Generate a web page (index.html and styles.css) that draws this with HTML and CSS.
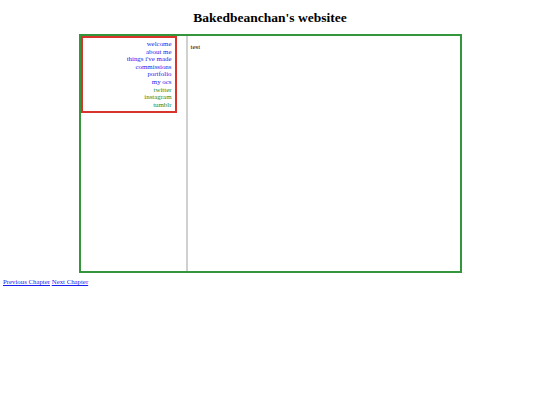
FILE: index.html
```html
<!DOCTYPE html>
<html>
<head>
<meta charset="utf-8">
<title>Bakedbeanchan's websitee</title>
<link rel="stylesheet" href="styles.css">
</head>
<body>
<h1 class="title">Bakedbeanchan's websitee</h1>
<div class="frame">
  <div class="sidebar">
    <nav class="menu">
      <a href="#" class="blue">welcome</a>
      <a href="#" class="blue">about me</a>
      <a href="#" class="blue">things i've made</a>
      <a href="#" class="blue">commissions</a>
      <a href="#" class="blue">portfolio</a>
      <a href="#" class="blue">my ocs</a>
      <a href="#" class="green">twitter</a>
      <a href="#" class="green">instagram</a>
      <a href="#" class="green">tumblr</a>
    </nav>
  </div>
  <div class="content">test</div>
</div>
<div class="chapters"><a href="#">Previous Chapter</a> <a href="#">Next Chapter</a></div>
</body>
</html>
```
FILE: styles.css
```css
html, body {
  margin: 0;
  padding: 0;
  background: #fff;
}
body {
  padding: 3px;
  font-family: "Liberation Serif", "Times New Roman", serif;
  color: #000;
}
.title {
  font-size: 13.5px;
  font-weight: bold;
  text-align: center;
  margin: 7px 0 0 0;
  line-height: 16px;
  height: 24px;
}
.frame {
  width: 379px;
  height: 235px;
  margin: 0 auto;
  border: 2px solid #33963a;
  display: flex;
}
.sidebar {
  width: 105px;
  border-right: 2px solid #d0d0d0;
  flex: none;
}
.menu {
  width: 89px;
  height: 71px;
  border: 2px solid #d9342b;
  padding: 2px 3px 0 0;
  display: flex;
  flex-direction: column;
  align-items: flex-end;
  font-size: 6.9px;
  line-height: 7.6px;
}
.menu a {
  text-decoration: none;
}
.menu a.blue { color: #1a1aee; }
.menu a.green { color: #1e8a1e; }
.content {
  flex: 1;
  padding: 7px 3px;
  font-size: 6.9px;
  line-height: 8px;
}
.chapters {
  margin-top: 5px;
  font-size: 6.8px;
  line-height: 8px;
}
.chapters a {
  color: #1a1aee;
}
```
